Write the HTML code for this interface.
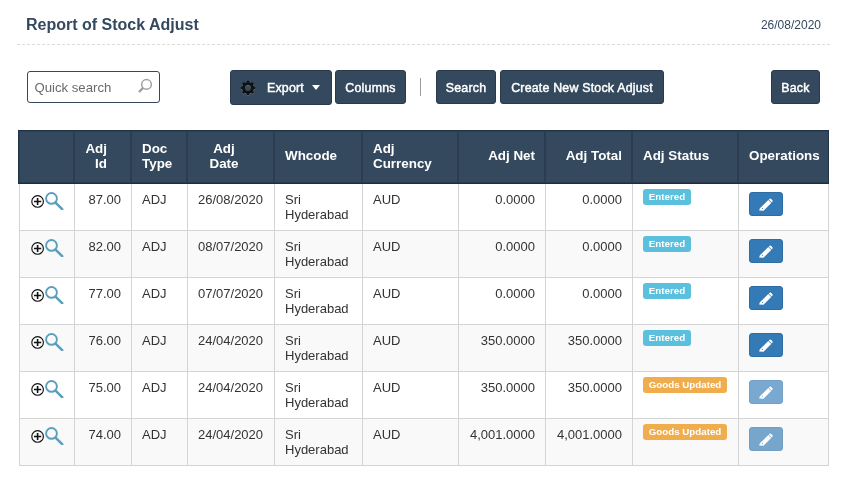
<!DOCTYPE html><html><head><meta charset="utf-8"><style>
*{margin:0;padding:0;box-sizing:border-box}
html,body{width:849px;height:477px;background:#fff;overflow:hidden;font-family:"Liberation Sans",sans-serif}
.wrap{position:absolute;left:0;top:0;width:849px;height:477px;will-change:transform}
.a{position:absolute}
.title{left:26px;top:15px;font-size:16px;font-weight:bold;color:#34495e;line-height:20px;white-space:nowrap}
.date{right:28px;top:18px;font-size:12px;color:#34495e;line-height:15px}
.dash{left:17px;top:44px;width:813px;height:1px;background:repeating-linear-gradient(90deg,#dcdcdc 0 3px,transparent 3px 5px)}
.inp{left:27px;top:71px;width:133px;height:32px;border:1.5px solid #34495e;border-radius:3px;background:#fff}
.ph{left:34.4px;top:79.6px;font-size:13.2px;color:#6a6a6a;line-height:15px;white-space:nowrap}
.btn{top:70px;height:34px;background:#34495e;border:1px solid #2a3a4b;border-radius:3px;color:#fff;font-size:12.4px;line-height:34px;text-align:center;white-space:nowrap;-webkit-text-stroke:0.45px #fff;letter-spacing:.2px}
.sep{left:420px;top:78px;width:1px;height:18px;background:#999}
.hdr{left:18px;top:130px;width:811px;height:54px;background:#34495e;border:1px solid #233445;border-bottom:1px solid #1f2e3f;box-shadow:inset 1px 1px 0 #2d3f52}
.vl{width:2px;background:#2d3d50}
.th{color:#fff;font-weight:bold;font-size:13.4px;line-height:15px;white-space:nowrap}
.row{left:19px;width:810px;height:47px;border:1px solid #d4d4d4;border-top:none}
.bl{width:1px;background:#d4d4d4}
.td{color:#333;font-size:13px;line-height:15px;white-space:nowrap}
.r{text-align:right}
.lbl{height:16px;border-radius:3px;color:#fff;font-weight:bold;font-size:9.75px;line-height:15px;text-align:center;white-space:nowrap}
.eb{width:34px;height:24px;border-radius:3px;background:#337ab7;border:1px solid #2e6da4}
.eb.dis{opacity:.65}
</style></head><body><div class="wrap">
<div class="a title">Report of Stock Adjust</div>
<div class="a date">26/08/2020</div>
<div class="a dash"></div>
<div class="a inp"></div><div class="a ph">Quick search</div>
<svg class="a" style="left:136px;top:76px" width="20" height="20" viewBox="0 0 20 20"><circle cx="10.5" cy="8.4" r="4.8" fill="none" stroke="#a0a0a0" stroke-width="1.5"/><line x1="7.2" y1="11.8" x2="3" y2="16" stroke="#999" stroke-width="2.2"/></svg>
<div class="a btn" style="left:230px;width:102px;height:35px"></div>
<svg class="a" style="left:240px;top:80px" width="16" height="16" viewBox="-8 -8 16 16"><path fill="rgba(255,255,255,0.22)" fill-rule="evenodd" transform="translate(0 0.8)" d="M-1.76 -5.32 L-0.87 -7.25 L0.87 -7.25 L1.76 -5.32 L2.51 -5.00 L4.51 -5.74 L5.74 -4.51 L5.00 -2.51 L5.32 -1.76 L7.25 -0.87 L7.25 0.87 L5.32 1.76 L5.00 2.51 L5.74 4.51 L4.51 5.74 L2.51 5.00 L1.76 5.32 L0.87 7.25 L-0.87 7.25 L-1.76 5.32 L-2.51 5.00 L-4.51 5.74 L-5.74 4.51 L-5.00 2.51 L-5.32 1.76 L-7.25 0.87 L-7.25 -0.87 L-5.32 -1.76 L-5.00 -2.51 L-5.74 -4.51 L-4.51 -5.74 L-2.51 -5.00 Z M2.9 0 A2.9 2.9 0 1 0 -2.9 0 A2.9 2.9 0 1 0 2.9 0 Z"/><path fill="#111" fill-rule="evenodd" d="M-1.76 -5.32 L-0.87 -7.25 L0.87 -7.25 L1.76 -5.32 L2.51 -5.00 L4.51 -5.74 L5.74 -4.51 L5.00 -2.51 L5.32 -1.76 L7.25 -0.87 L7.25 0.87 L5.32 1.76 L5.00 2.51 L5.74 4.51 L4.51 5.74 L2.51 5.00 L1.76 5.32 L0.87 7.25 L-0.87 7.25 L-1.76 5.32 L-2.51 5.00 L-4.51 5.74 L-5.74 4.51 L-5.00 2.51 L-5.32 1.76 L-7.25 0.87 L-7.25 -0.87 L-5.32 -1.76 L-5.00 -2.51 L-5.74 -4.51 L-4.51 -5.74 L-2.51 -5.00 Z M2.9 0 A2.9 2.9 0 1 0 -2.9 0 A2.9 2.9 0 1 0 2.9 0 Z"/></svg>
<div class="a" style="left:267px;top:81px;font-size:12.4px;color:#fff;line-height:15px;-webkit-text-stroke:0.45px #fff;letter-spacing:.2px">Export</div>
<div class="a" style="left:312px;top:85px;width:0;height:0;border-left:4.5px solid transparent;border-right:4.5px solid transparent;border-top:5px solid #fff"></div>
<div class="a btn" style="left:335px;width:71px;height:34px">Columns</div>
<div class="a sep"></div>
<div class="a btn" style="left:436px;width:60px">Search</div>
<div class="a btn" style="left:500px;width:164px">Create New Stock Adjust</div>
<div class="a btn" style="left:771px;width:49px">Back</div>
<div class="a hdr"></div><div class="a" style="left:19px;top:182px;width:809px;height:1px;background:#2a3a4c"></div>
<div class="a vl" style="left:73px;top:131px;height:51px"></div>
<div class="a vl" style="left:130px;top:131px;height:51px"></div>
<div class="a vl" style="left:186px;top:131px;height:51px"></div>
<div class="a vl" style="left:273px;top:131px;height:51px"></div>
<div class="a vl" style="left:361px;top:131px;height:51px"></div>
<div class="a vl" style="left:457px;top:131px;height:51px"></div>
<div class="a vl" style="left:544px;top:131px;height:51px"></div>
<div class="a vl" style="left:631px;top:131px;height:51px"></div>
<div class="a vl" style="left:737px;top:131px;height:51px"></div>
<div class="a th r" style="right:742px;top:141px">Adj<br>Id</div>
<div class="a th" style="left:142px;top:141px">Doc<br>Type</div>
<div class="a th" style="left:174px;top:141px;width:100px;text-align:center">Adj<br>Date</div>
<div class="a th" style="left:285px;top:148px">Whcode</div>
<div class="a th" style="left:373px;top:141px">Adj<br>Currency</div>
<div class="a th r" style="right:314px;top:148px">Adj Net</div>
<div class="a th r" style="right:227px;top:148px">Adj Total</div>
<div class="a th" style="left:643px;top:148px">Adj Status</div>
<div class="a th" style="left:749px;top:148px">Operations</div>
<div class="a row" style="top:184px;background:#fff"></div>
<div class="a bl" style="left:74px;top:184px;height:47px"></div>
<div class="a bl" style="left:131px;top:184px;height:47px"></div>
<div class="a bl" style="left:187px;top:184px;height:47px"></div>
<div class="a bl" style="left:274px;top:184px;height:47px"></div>
<div class="a bl" style="left:362px;top:184px;height:47px"></div>
<div class="a bl" style="left:458px;top:184px;height:47px"></div>
<div class="a bl" style="left:545px;top:184px;height:47px"></div>
<div class="a bl" style="left:632px;top:184px;height:47px"></div>
<div class="a bl" style="left:738px;top:184px;height:47px"></div>
<svg class="a" style="left:28px;top:188px" width="38" height="22" viewBox="0 0 38 22"><circle cx="9.6" cy="13.4" r="5.8" fill="none" stroke="#111" stroke-width="1.15"/><path d="M6 13.5 H13.2 M9.6 10 V17" stroke="#111" stroke-width="1.6"/><circle cx="23.5" cy="10.4" r="5.4" fill="none" stroke="#5a9fbc" stroke-width="1.9"/><line x1="27.5" y1="14.6" x2="34.2" y2="21.2" stroke="#5a9fbc" stroke-width="2.5" stroke-linecap="round"/></svg>
<div class="a td r" style="right:728px;top:192px">87.00</div>
<div class="a td" style="left:142px;top:192px">ADJ</div>
<div class="a td" style="left:198px;top:192px">26/08/2020</div>
<div class="a td" style="left:285px;top:192px">Sri<br>Hyderabad</div>
<div class="a td" style="left:373px;top:192px">AUD</div>
<div class="a td r" style="right:314px;top:192px">0.0000</div>
<div class="a td r" style="right:227px;top:192px">0.0000</div>
<div class="a lbl" style="left:643px;top:189px;width:48px;background:#5bc0de">Entered</div>
<div class="a eb" style="left:749px;top:192px"><svg style="position:absolute;left:0;top:0" width="34" height="24" viewBox="0 0 34 24"><g transform="translate(15.6 12.6) rotate(-45)"><path fill="#fff" d="M-8.1 -1.1 L-6 -2.1 L5.9 -2.1 L5.9 2.1 L-5.1 2.1 Z M6.5 -2.1 L7.4 -2.1 A1.3 2.1 0 0 1 7.4 2.1 L6.5 2.1 Z"/><circle cx="-4.3" cy="-0.3" r="0.55" fill="#337ab7"/></g></svg></div>
<div class="a row" style="top:231px;background:#f9f9f9"></div>
<div class="a bl" style="left:74px;top:231px;height:47px"></div>
<div class="a bl" style="left:131px;top:231px;height:47px"></div>
<div class="a bl" style="left:187px;top:231px;height:47px"></div>
<div class="a bl" style="left:274px;top:231px;height:47px"></div>
<div class="a bl" style="left:362px;top:231px;height:47px"></div>
<div class="a bl" style="left:458px;top:231px;height:47px"></div>
<div class="a bl" style="left:545px;top:231px;height:47px"></div>
<div class="a bl" style="left:632px;top:231px;height:47px"></div>
<div class="a bl" style="left:738px;top:231px;height:47px"></div>
<svg class="a" style="left:28px;top:235px" width="38" height="22" viewBox="0 0 38 22"><circle cx="9.6" cy="13.4" r="5.8" fill="none" stroke="#111" stroke-width="1.15"/><path d="M6 13.5 H13.2 M9.6 10 V17" stroke="#111" stroke-width="1.6"/><circle cx="23.5" cy="10.4" r="5.4" fill="none" stroke="#5a9fbc" stroke-width="1.9"/><line x1="27.5" y1="14.6" x2="34.2" y2="21.2" stroke="#5a9fbc" stroke-width="2.5" stroke-linecap="round"/></svg>
<div class="a td r" style="right:728px;top:239px">82.00</div>
<div class="a td" style="left:142px;top:239px">ADJ</div>
<div class="a td" style="left:198px;top:239px">08/07/2020</div>
<div class="a td" style="left:285px;top:239px">Sri<br>Hyderabad</div>
<div class="a td" style="left:373px;top:239px">AUD</div>
<div class="a td r" style="right:314px;top:239px">0.0000</div>
<div class="a td r" style="right:227px;top:239px">0.0000</div>
<div class="a lbl" style="left:643px;top:236px;width:48px;background:#5bc0de">Entered</div>
<div class="a eb" style="left:749px;top:239px"><svg style="position:absolute;left:0;top:0" width="34" height="24" viewBox="0 0 34 24"><g transform="translate(15.6 12.6) rotate(-45)"><path fill="#fff" d="M-8.1 -1.1 L-6 -2.1 L5.9 -2.1 L5.9 2.1 L-5.1 2.1 Z M6.5 -2.1 L7.4 -2.1 A1.3 2.1 0 0 1 7.4 2.1 L6.5 2.1 Z"/><circle cx="-4.3" cy="-0.3" r="0.55" fill="#337ab7"/></g></svg></div>
<div class="a row" style="top:278px;background:#fff"></div>
<div class="a bl" style="left:74px;top:278px;height:47px"></div>
<div class="a bl" style="left:131px;top:278px;height:47px"></div>
<div class="a bl" style="left:187px;top:278px;height:47px"></div>
<div class="a bl" style="left:274px;top:278px;height:47px"></div>
<div class="a bl" style="left:362px;top:278px;height:47px"></div>
<div class="a bl" style="left:458px;top:278px;height:47px"></div>
<div class="a bl" style="left:545px;top:278px;height:47px"></div>
<div class="a bl" style="left:632px;top:278px;height:47px"></div>
<div class="a bl" style="left:738px;top:278px;height:47px"></div>
<svg class="a" style="left:28px;top:282px" width="38" height="22" viewBox="0 0 38 22"><circle cx="9.6" cy="13.4" r="5.8" fill="none" stroke="#111" stroke-width="1.15"/><path d="M6 13.5 H13.2 M9.6 10 V17" stroke="#111" stroke-width="1.6"/><circle cx="23.5" cy="10.4" r="5.4" fill="none" stroke="#5a9fbc" stroke-width="1.9"/><line x1="27.5" y1="14.6" x2="34.2" y2="21.2" stroke="#5a9fbc" stroke-width="2.5" stroke-linecap="round"/></svg>
<div class="a td r" style="right:728px;top:286px">77.00</div>
<div class="a td" style="left:142px;top:286px">ADJ</div>
<div class="a td" style="left:198px;top:286px">07/07/2020</div>
<div class="a td" style="left:285px;top:286px">Sri<br>Hyderabad</div>
<div class="a td" style="left:373px;top:286px">AUD</div>
<div class="a td r" style="right:314px;top:286px">0.0000</div>
<div class="a td r" style="right:227px;top:286px">0.0000</div>
<div class="a lbl" style="left:643px;top:283px;width:48px;background:#5bc0de">Entered</div>
<div class="a eb" style="left:749px;top:286px"><svg style="position:absolute;left:0;top:0" width="34" height="24" viewBox="0 0 34 24"><g transform="translate(15.6 12.6) rotate(-45)"><path fill="#fff" d="M-8.1 -1.1 L-6 -2.1 L5.9 -2.1 L5.9 2.1 L-5.1 2.1 Z M6.5 -2.1 L7.4 -2.1 A1.3 2.1 0 0 1 7.4 2.1 L6.5 2.1 Z"/><circle cx="-4.3" cy="-0.3" r="0.55" fill="#337ab7"/></g></svg></div>
<div class="a row" style="top:325px;background:#f9f9f9"></div>
<div class="a bl" style="left:74px;top:325px;height:47px"></div>
<div class="a bl" style="left:131px;top:325px;height:47px"></div>
<div class="a bl" style="left:187px;top:325px;height:47px"></div>
<div class="a bl" style="left:274px;top:325px;height:47px"></div>
<div class="a bl" style="left:362px;top:325px;height:47px"></div>
<div class="a bl" style="left:458px;top:325px;height:47px"></div>
<div class="a bl" style="left:545px;top:325px;height:47px"></div>
<div class="a bl" style="left:632px;top:325px;height:47px"></div>
<div class="a bl" style="left:738px;top:325px;height:47px"></div>
<svg class="a" style="left:28px;top:329px" width="38" height="22" viewBox="0 0 38 22"><circle cx="9.6" cy="13.4" r="5.8" fill="none" stroke="#111" stroke-width="1.15"/><path d="M6 13.5 H13.2 M9.6 10 V17" stroke="#111" stroke-width="1.6"/><circle cx="23.5" cy="10.4" r="5.4" fill="none" stroke="#5a9fbc" stroke-width="1.9"/><line x1="27.5" y1="14.6" x2="34.2" y2="21.2" stroke="#5a9fbc" stroke-width="2.5" stroke-linecap="round"/></svg>
<div class="a td r" style="right:728px;top:333px">76.00</div>
<div class="a td" style="left:142px;top:333px">ADJ</div>
<div class="a td" style="left:198px;top:333px">24/04/2020</div>
<div class="a td" style="left:285px;top:333px">Sri<br>Hyderabad</div>
<div class="a td" style="left:373px;top:333px">AUD</div>
<div class="a td r" style="right:314px;top:333px">350.0000</div>
<div class="a td r" style="right:227px;top:333px">350.0000</div>
<div class="a lbl" style="left:643px;top:330px;width:48px;background:#5bc0de">Entered</div>
<div class="a eb" style="left:749px;top:333px"><svg style="position:absolute;left:0;top:0" width="34" height="24" viewBox="0 0 34 24"><g transform="translate(15.6 12.6) rotate(-45)"><path fill="#fff" d="M-8.1 -1.1 L-6 -2.1 L5.9 -2.1 L5.9 2.1 L-5.1 2.1 Z M6.5 -2.1 L7.4 -2.1 A1.3 2.1 0 0 1 7.4 2.1 L6.5 2.1 Z"/><circle cx="-4.3" cy="-0.3" r="0.55" fill="#337ab7"/></g></svg></div>
<div class="a row" style="top:372px;background:#fff"></div>
<div class="a bl" style="left:74px;top:372px;height:47px"></div>
<div class="a bl" style="left:131px;top:372px;height:47px"></div>
<div class="a bl" style="left:187px;top:372px;height:47px"></div>
<div class="a bl" style="left:274px;top:372px;height:47px"></div>
<div class="a bl" style="left:362px;top:372px;height:47px"></div>
<div class="a bl" style="left:458px;top:372px;height:47px"></div>
<div class="a bl" style="left:545px;top:372px;height:47px"></div>
<div class="a bl" style="left:632px;top:372px;height:47px"></div>
<div class="a bl" style="left:738px;top:372px;height:47px"></div>
<svg class="a" style="left:28px;top:376px" width="38" height="22" viewBox="0 0 38 22"><circle cx="9.6" cy="13.4" r="5.8" fill="none" stroke="#111" stroke-width="1.15"/><path d="M6 13.5 H13.2 M9.6 10 V17" stroke="#111" stroke-width="1.6"/><circle cx="23.5" cy="10.4" r="5.4" fill="none" stroke="#5a9fbc" stroke-width="1.9"/><line x1="27.5" y1="14.6" x2="34.2" y2="21.2" stroke="#5a9fbc" stroke-width="2.5" stroke-linecap="round"/></svg>
<div class="a td r" style="right:728px;top:380px">75.00</div>
<div class="a td" style="left:142px;top:380px">ADJ</div>
<div class="a td" style="left:198px;top:380px">24/04/2020</div>
<div class="a td" style="left:285px;top:380px">Sri<br>Hyderabad</div>
<div class="a td" style="left:373px;top:380px">AUD</div>
<div class="a td r" style="right:314px;top:380px">350.0000</div>
<div class="a td r" style="right:227px;top:380px">350.0000</div>
<div class="a lbl" style="left:643px;top:377px;width:84px;background:#f0ad4e">Goods Updated</div>
<div class="a eb dis" style="left:749px;top:380px"><svg style="position:absolute;left:0;top:0" width="34" height="24" viewBox="0 0 34 24"><g transform="translate(15.6 12.6) rotate(-45)"><path fill="#fff" d="M-8.1 -1.1 L-6 -2.1 L5.9 -2.1 L5.9 2.1 L-5.1 2.1 Z M6.5 -2.1 L7.4 -2.1 A1.3 2.1 0 0 1 7.4 2.1 L6.5 2.1 Z"/><circle cx="-4.3" cy="-0.3" r="0.55" fill="#337ab7"/></g></svg></div>
<div class="a row" style="top:419px;background:#f9f9f9"></div>
<div class="a bl" style="left:74px;top:419px;height:47px"></div>
<div class="a bl" style="left:131px;top:419px;height:47px"></div>
<div class="a bl" style="left:187px;top:419px;height:47px"></div>
<div class="a bl" style="left:274px;top:419px;height:47px"></div>
<div class="a bl" style="left:362px;top:419px;height:47px"></div>
<div class="a bl" style="left:458px;top:419px;height:47px"></div>
<div class="a bl" style="left:545px;top:419px;height:47px"></div>
<div class="a bl" style="left:632px;top:419px;height:47px"></div>
<div class="a bl" style="left:738px;top:419px;height:47px"></div>
<svg class="a" style="left:28px;top:423px" width="38" height="22" viewBox="0 0 38 22"><circle cx="9.6" cy="13.4" r="5.8" fill="none" stroke="#111" stroke-width="1.15"/><path d="M6 13.5 H13.2 M9.6 10 V17" stroke="#111" stroke-width="1.6"/><circle cx="23.5" cy="10.4" r="5.4" fill="none" stroke="#5a9fbc" stroke-width="1.9"/><line x1="27.5" y1="14.6" x2="34.2" y2="21.2" stroke="#5a9fbc" stroke-width="2.5" stroke-linecap="round"/></svg>
<div class="a td r" style="right:728px;top:427px">74.00</div>
<div class="a td" style="left:142px;top:427px">ADJ</div>
<div class="a td" style="left:198px;top:427px">24/04/2020</div>
<div class="a td" style="left:285px;top:427px">Sri<br>Hyderabad</div>
<div class="a td" style="left:373px;top:427px">AUD</div>
<div class="a td r" style="right:314px;top:427px">4,001.0000</div>
<div class="a td r" style="right:227px;top:427px">4,001.0000</div>
<div class="a lbl" style="left:643px;top:424px;width:84px;background:#f0ad4e">Goods Updated</div>
<div class="a eb dis" style="left:749px;top:427px"><svg style="position:absolute;left:0;top:0" width="34" height="24" viewBox="0 0 34 24"><g transform="translate(15.6 12.6) rotate(-45)"><path fill="#fff" d="M-8.1 -1.1 L-6 -2.1 L5.9 -2.1 L5.9 2.1 L-5.1 2.1 Z M6.5 -2.1 L7.4 -2.1 A1.3 2.1 0 0 1 7.4 2.1 L6.5 2.1 Z"/><circle cx="-4.3" cy="-0.3" r="0.55" fill="#337ab7"/></g></svg></div>
</div></body></html>
